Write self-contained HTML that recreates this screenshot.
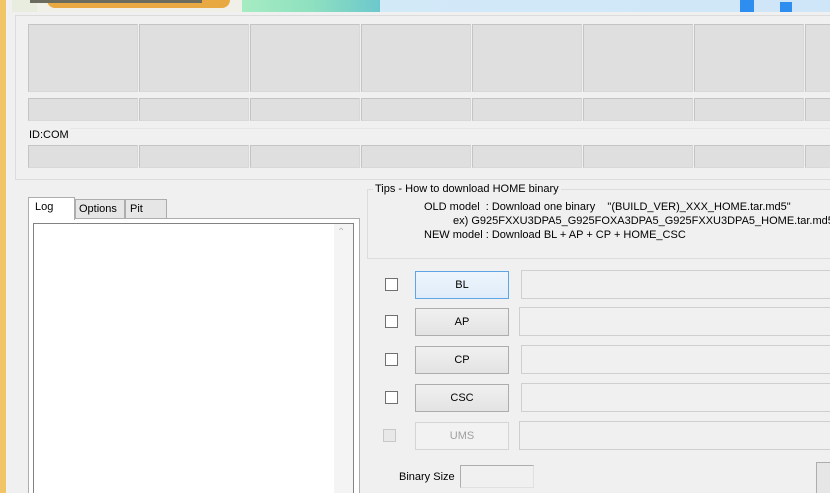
<!DOCTYPE html>
<html style="overflow:hidden;height:493px"><head><meta charset="utf-8"><style>
html,body{margin:0;width:830px;height:493px;overflow:hidden}
body{background:#f0f0f0;font-family:"Liberation Sans",sans-serif;font-size:11px;color:#000;position:relative}
.a{position:absolute}
.cell{position:absolute;background:#dfdfdf;border:1px solid #c4c4c4;border-right-color:#d8d8d8;border-bottom-color:#d8d8d8;box-sizing:border-box}
.btn{position:absolute;left:415px;width:94px;height:28px;box-sizing:border-box;border:1px solid #adadad;background:linear-gradient(#f0f0f0,#e3e3e3);text-align:center;line-height:26px;font-size:11px}
.fld{position:absolute;left:521px;width:320px;height:29px;box-sizing:border-box;border:1px solid #cfcfcf;background:#f0f0f0}
.cb{position:absolute;left:385px;width:13px;height:13px;box-sizing:border-box;border:1px solid #707070;background:#fff}
</style></head><body>
<div class="a" style="left:0;top:0;width:6px;height:493px;background:#f1c466"></div>
<div class="a" style="left:12px;top:0;width:818px;height:12px;background:linear-gradient(90deg,#e9ede0 0,#e9ede0 25px,#f0f0e8 25px,#f0f0e8 230px,#a6ecc2 230px,#8ee0c0 300px,#6cc8cc 368px,#d2e9f8 368px,#cfe6f8 830px)"></div>
<div class="a" style="left:47px;top:0;width:183px;height:8px;background:#e8a842;border-radius:0 0 8px 8px"></div>
<div class="a" style="left:30px;top:0;width:172px;height:3px;background:#6b6b5e"></div>
<div class="a" style="left:740px;top:0;width:14px;height:12px;background:#2e8ef0"></div>
<div class="a" style="left:780px;top:2px;width:12px;height:10px;background:#2e8ef0"></div>
<div class="a" style="left:15px;top:15px;width:830px;height:165px;border:1px solid #dcdcdc;box-sizing:border-box"></div>
<div id="cells"></div>
<div class="a" style="left:70px;top:128px;width:770px;height:0;border-top:1px solid #e6e6e6"></div>
<div class="a" style="left:29px;top:129px">ID:COM</div>
<div class="a" style="left:75px;top:199px;width:50px;height:20px;border:1px solid #adadad;background:#e6e6e6;box-sizing:border-box;padding:3px 0 0 3px">Options</div>
<div class="a" style="left:125px;top:199px;width:42px;height:20px;border:1px solid #adadad;background:#e6e6e6;box-sizing:border-box;padding:3px 0 0 4px">Pit</div>
<div class="a" style="left:28px;top:218px;width:332px;height:290px;border:1px solid #adadad;background:#fff;box-sizing:border-box"></div>
<div class="a" style="left:28px;top:197px;width:47px;height:23px;border:1px solid #adadad;border-bottom:none;background:#fff;box-sizing:border-box;padding:3px 0 0 6px">Log</div>
<div class="a" style="left:33px;top:223px;width:321px;height:280px;border:1px solid #828282;border-bottom:none;background:#fff;box-sizing:border-box"></div>
<div class="a" style="left:334px;top:224px;width:19px;height:280px;background:#f4f4f4"></div>
<div class="a" style="left:337px;top:227px;font-size:10px;color:#bbb">&#8963;</div>
<div class="a" style="left:367px;top:189px;width:480px;height:70px;border:1px solid #dcdcdc;box-sizing:border-box"></div>
<div class="a" style="left:373px;top:183px;background:#f0f0f0;padding:0 2px">Tips - How to download HOME binary</div>
<div class="a" style="left:424px;top:201px;white-space:pre">OLD model  : Download one binary    "(BUILD_VER)_XXX_HOME.tar.md5"</div>
<div class="a" style="left:453px;top:215px;white-space:pre">ex) G925FXXU3DPA5_G925FOXA3DPA5_G925FXXU3DPA5_HOME.tar.md5</div>
<div class="a" style="left:424px;top:229px;white-space:pre">NEW model : Download BL + AP + CP + HOME_CSC</div>
<div class="cb" style="top:278px"></div><div class="btn" style="top:271px;border-color:#5fa5e6;background:linear-gradient(#eef5fc,#dfecf9)">BL</div><div class="fld" style="top:270px"></div>
<div class="cb" style="top:315px"></div><div class="btn" style="top:308px">AP</div><div class="fld" style="top:307px;left:519px"></div>
<div class="cb" style="top:353px"></div><div class="btn" style="top:346px">CP</div><div class="fld" style="top:345px"></div>
<div class="cb" style="top:391px"></div><div class="btn" style="top:384px">CSC</div><div class="fld" style="top:383px"></div>
<div class="cb" style="top:429px;left:383px;border-color:#c8c8c8;background:#e8e8e8"></div><div class="btn" style="top:422px;border-color:#d5d5d5;background:#f2f2f2;color:#a0a0a0">UMS</div><div class="fld" style="top:421px;left:519px"></div>
<div class="a" style="left:399px;top:471px">Binary Size</div>
<div class="a" style="left:460px;top:465px;width:74px;height:23px;border:1px solid #adadad;border-right-color:#e0e0e0;border-bottom-color:#e0e0e0;box-sizing:border-box"></div>
<div class="a" style="left:816px;top:462px;width:30px;height:31px;border:1px solid #adadad;border-bottom:none;background:#e6e6e6;box-sizing:border-box"></div>
<script>
var h='';var xs=[28,139,250,361,472,583,694,805];
xs.forEach(function(x){
h+='<div class="cell" style="left:'+x+'px;top:24px;width:110px;height:68px"></div>';
h+='<div class="cell" style="left:'+x+'px;top:98px;width:110px;height:23px"></div>';
h+='<div class="cell" style="left:'+x+'px;top:145px;width:110px;height:23px"></div>';});
document.getElementById('cells').innerHTML=h;
</script>
</body></html>
